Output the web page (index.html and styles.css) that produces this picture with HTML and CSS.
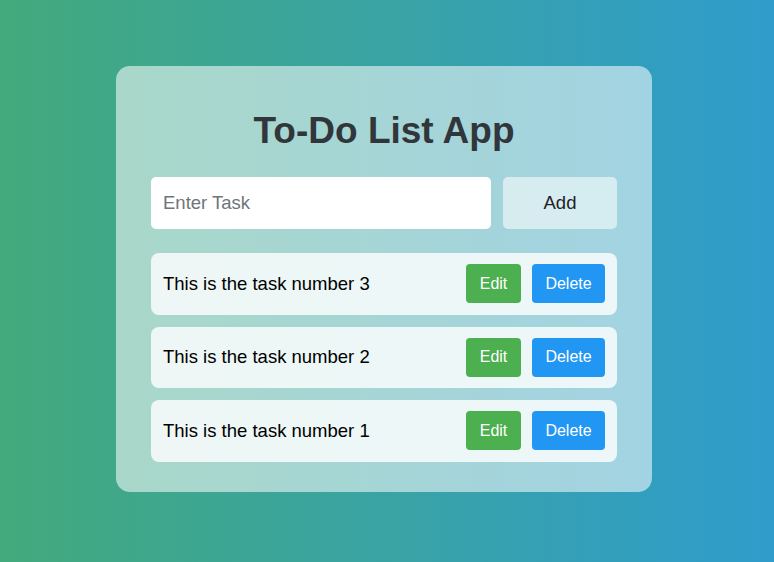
FILE: index.html
```html
<!DOCTYPE html>
<html>
<head>
<meta charset="utf-8">
<link rel="stylesheet" href="styles.css">
</head>
<body>
<div class="page">
  <div class="card">
    <h1 class="title">To-Do List App</h1>
    <div class="input-row">
      <input class="task-input" type="text" placeholder="Enter Task">
      <button class="add-btn">Add</button>
    </div>
    <ul class="task-list">
      <li class="task">
        <span class="task-text">This is the task number 3</span>
        <button class="btn edit">Edit</button>
        <button class="btn delete">Delete</button>
      </li>
      <li class="task">
        <span class="task-text">This is the task number 2</span>
        <button class="btn edit">Edit</button>
        <button class="btn delete">Delete</button>
      </li>
      <li class="task">
        <span class="task-text">This is the task number 1</span>
        <button class="btn edit">Edit</button>
        <button class="btn delete">Delete</button>
      </li>
    </ul>
  </div>
</div>
</body>
</html>
```
FILE: styles.css
```css
* { box-sizing: border-box; }
html, body { margin: 0; padding: 0; }
body {
  font-family: "Liberation Sans", Arial, sans-serif;
  background: linear-gradient(to right, #43aa7c, #2f9ccc);
  width: 774px;
  height: 562px;
  overflow: hidden;
}
.page {
  height: 562px;
  display: flex;
  justify-content: center;
  align-items: flex-start;
  padding-top: 66px;
  padding-right: 6px;
}
.card {
  width: 536px;
  height: 426px;
  background: rgba(255, 255, 255, 0.55);
  border-radius: 14px;
  padding: 41px 35px 30px;
}
.title {
  margin: 0 0 22px;
  text-align: center;
  font-size: 37px;
  font-weight: bold;
  color: #31363b;
  line-height: 48px;
}
.input-row {
  display: flex;
  gap: 12px;
  margin-bottom: 24px;
}
.task-input {
  flex: 1;
  height: 52px;
  border: none;
  border-radius: 5px;
  background: #fff;
  padding: 0 12px;
  font-family: "Liberation Sans", Arial, sans-serif;
  font-size: 18.5px;
  outline: none;
}
.task-input::placeholder { color: #6f7579; }
.add-btn {
  width: 114px;
  height: 52px;
  border: none;
  border-radius: 5px;
  background: rgba(255, 255, 255, 0.55);
  font-family: "Liberation Sans", Arial, sans-serif;
  font-size: 18.5px;
  color: #1e2226;
}
.task-list {
  list-style: none;
  margin: 0;
  padding: 0;
  display: flex;
  flex-direction: column;
  gap: 12px;
}
.task {
  height: 61.5px;
  display: flex;
  align-items: center;
  gap: 11px;
  padding: 0 12px;
  background: rgba(255, 255, 255, 0.8);
  border-radius: 8px;
}
.task-text {
  flex: 1;
  font-size: 18.5px;
  color: #000;
}
.btn {
  height: 39px;
  border: none;
  border-radius: 4px;
  color: #fff;
  font-family: "Liberation Sans", Arial, sans-serif;
  font-size: 16px;
}
.edit { width: 55px; background: #4caf50; }
.delete { width: 73px; background: #2196f3; }
```
